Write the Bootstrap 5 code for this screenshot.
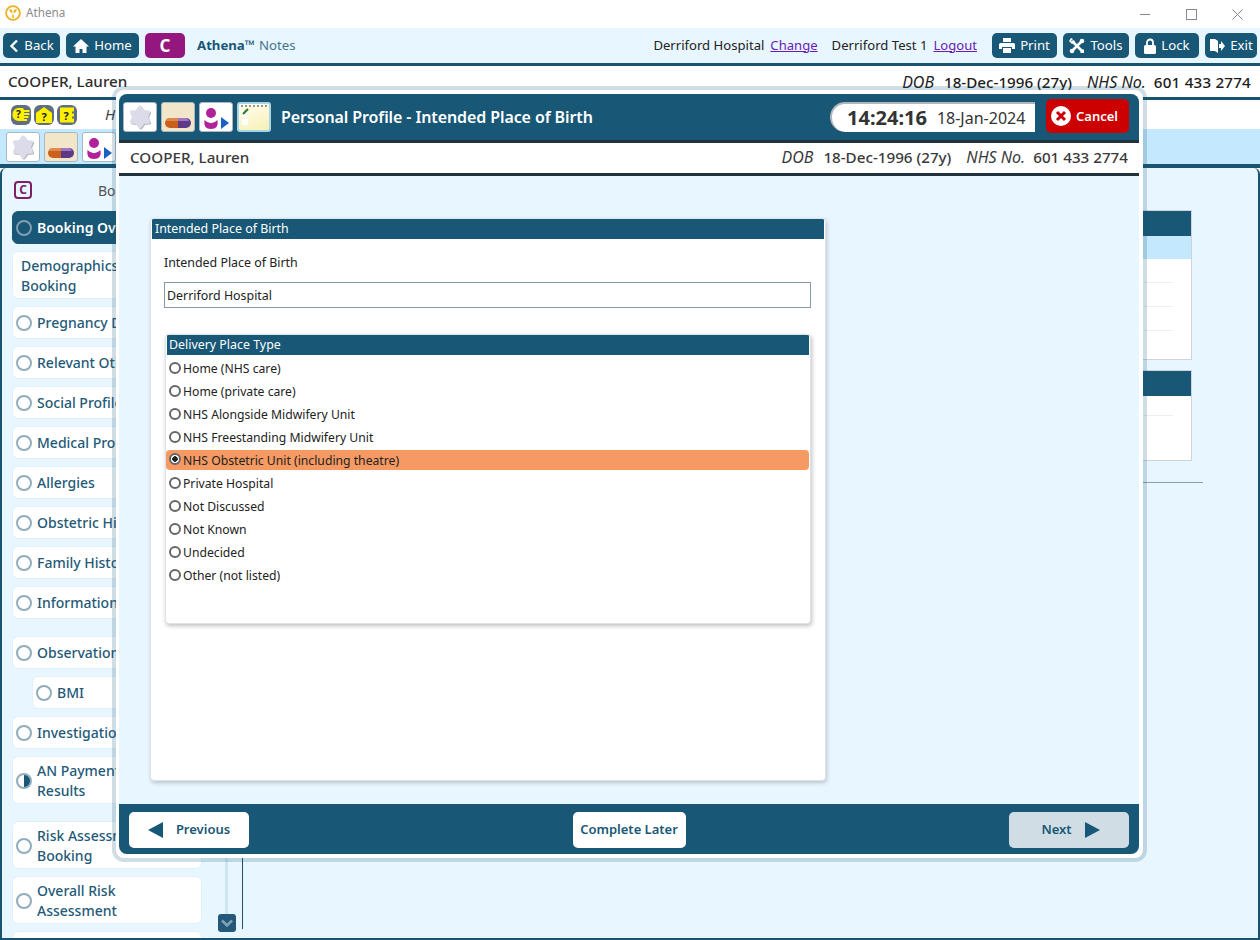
<!DOCTYPE html>
<html lang="en"><head><meta charset="utf-8"><title>Athena</title>
<link href="https://cdn.jsdelivr.net/npm/bootstrap@5.3.0/dist/css/bootstrap.min.css" rel="stylesheet">
<style>
html,body{height:940px;overflow:hidden;background:#fff}
body{font-family:"Noto Sans","Open Sans",sans-serif;font-size:13px;color:#222;position:relative;width:1260px}
.titlebar{height:28px;padding-left:5px;padding-bottom:2px;color:#8b8b8b;font-size:11.7px}
.logomark{margin-right:5px}
.winctl{margin-left:auto}
.winctl span{width:46px;height:28px;display:flex;align-items:center;justify-content:center;padding-top:2px}
.toolbar{height:38px;background:#e8f6ff;border-bottom:3px solid #18546f;padding:5px 3px 0 3px;gap:6px}
.tb{height:25px;background:#185776;color:#fff;border:0;border-radius:5px;font-size:13.2px;padding:0;display:inline-flex;align-items:center;justify-content:center;gap:5px;line-height:1;flex:none}
.tb:hover{background:#185776;color:#fff}
.tb-c{background:#93177e;width:40px;font-weight:700;font-size:17px}
.tb-c:hover{background:#93177e}
.wback{width:57px}.whome{width:73px}.wprint{width:65px}.wtools{width:66px}.wlock{width:64px}.wexit{width:52px}
.appname{color:#185776;margin-left:6px;font-size:13.2px;height:25px}
.appname b{font-weight:700}
.appname span{color:#44748b}
.who{font-size:13.1px;color:#222;height:25px;margin-right:9px}
.who a{color:#6a1bb5;margin-left:6px}
.who .usr{margin-left:14px}
.ptrow{height:34px;border-bottom:3px solid #18546f;padding:0 9px 0 8px;font-size:15.2px;font-weight:500;color:#2d2d2d}
.ptrow i{font-weight:400;color:#222;font-size:16px}
.demo b{font-weight:500;margin:0 15px 0 10px;color:#1c1c1c}
.demo b:last-child{margin:0 0 0 8px}
.ptrow .demo b:last-child{letter-spacing:.2px}
.helprow{height:29px;padding-left:11px;gap:3px}
.helprow i{margin-left:25px;color:#444;font-size:15px}
.tabrow{height:39px;background:#c4e8fd;border-bottom:4px solid #18546f;padding:0 6px;gap:4px}
.ic{width:34px;height:30px;background:#fff;border:1px solid #a9b7c2;border-radius:3px;display:flex;align-items:center;justify-content:center;flex:none}
.ic.tan{background:#f2e6ca}
.ic.note{border:2px solid #a8d5e6;background:linear-gradient(160deg,#fffdf0,#f8f0b5)}
.workarea{height:772px;background:#e8f6ff;border-left:2px solid #18546f;border-right:2px solid #18546f;border-bottom:2px solid #18546f;overflow:hidden;border-radius:6px 6px 0 0}
.leftnav{width:200px;flex:none;padding:43px 0 0 10px;gap:7px;position:relative}
.navhead{position:absolute;left:12px;top:13px;width:18px;height:18px;border:2px solid #7d1f63;border-radius:4px;color:#7d1f63;font-size:12px;line-height:13px;text-align:center;font-weight:700}
.navhead2{position:absolute;left:96px;top:12px;color:#555;font-size:14px}
.navit{width:190px;height:33px;background:#fff;border:1px solid #dff1fb;border-radius:6px;display:flex;align-items:center;gap:3px;padding:0 0 0 3px;color:#1f5a78;font-size:14px;font-weight:500;line-height:20px;flex:none}
.navit.tall{height:48px;padding-top:1px}
.navit.active{background:#185776;color:#fff;border-color:#185776;font-weight:600}
.navit.sub{margin-left:20px;width:170px}
.navit.plain{padding-left:8px}
.navit.gap-a{margin-top:10px}
.rad{width:16px;height:16px;border:2px solid #8fadbd;border-radius:50%;flex:none;background:#fff;margin-right:2px}
.active .rad{background:#185776;border-color:#7f9eb0}
.rad.half{background:linear-gradient(90deg,#fff 50%,#185776 50%)}
.scrollcol{width:26px;flex:none;position:relative;margin-left:14px}
.track{position:absolute;left:9px;top:0;bottom:8px;width:3px;background:#cfe7f5}
.scrolldn{position:absolute;left:2px;top:746px;width:18px;height:18px;background:#24597a;border-radius:3px;display:flex;align-items:center;justify-content:center}
.vline{width:1px;background:#18546f;margin-bottom:9px;flex:none}
.content{flex:1;padding:42px 66px 0 0;display:flex;flex-direction:column;align-items:flex-end}
.bgpanel{width:560px;border:1px solid #ced4d8;background:#fff}
.bgpanel .ph{height:25px;background:#185776}
.bgpanel .pl{height:23px;background:#c4e8fd}
.bgpanel .ln{height:24px;border-bottom:1px solid #eee;margin-right:18px}
.bgpanel .lnshort{height:20px}
.bgpanel .fill-a{height:28px}
.bgpanel .fill-b{height:44px}
.bgpanel.second{margin-top:10px}
.bgrule{width:600px;margin:21px -11px 0 0;border-top:1px solid #8a9fb5}
.modalbox{position:absolute;left:112px;top:86px;width:1035px;height:776px;border:4px solid rgba(24,87,118,.2);border-radius:12px;background:#fff;background-clip:padding-box;padding:4px 4px 4px 3px}
.modalin{height:100%;background:#e8f6ff;border-radius:8px;overflow:hidden}
.mhead{height:46px;background:#185776;padding:8px 10px 0 4px;color:#fff;flex:none}
.mhead .ttl{font-size:16px;font-weight:600;margin:-9px 0 0 6px;letter-spacing:-.1px}
.mhead .ic{margin-right:4px}
.clock{width:205px;height:30px;background:#fff;border-top:2px solid #b0b6ba;border-left:2px solid #b0b6ba;border-radius:15px 0 0 15px;color:#333;padding-left:15px;gap:10px;margin-left:auto;flex:none}
.clock b{font-size:20px;font-weight:700}
.clock span{font-size:16px}
.btncancel{width:83px;height:34px;background:#c00;color:#fff;border:0;border-radius:5px;margin-left:11px;margin-top:-3px;font-size:13px;font-weight:600;padding:2px 0 0 5px;gap:5px;flex:none}
.btncancel svg{margin-top:-2px}
.btncancel:hover{background:#c00;color:#fff}
.mpt{height:36px;background:#fff;border-top:3px solid #24303a;border-bottom:3px solid #24303a;padding:0 11px 2px;font-size:15.2px;color:#3a3a3a;flex:none;font-weight:500}
.mpt i{font-weight:400;font-size:16px}
.mpt .demo b{color:#3a3a3a}
.mbody{flex:1;padding:42px 0 0 31px}
.fcard{width:676px;height:563px;background:#fff;border:1px solid #dde3e6;border-radius:4px;box-shadow:1px 2px 4px rgba(0,0,0,.2);overflow:hidden}
.fhd{height:20px;background:#185776;color:#fff;font-size:12.4px;line-height:20px;padding-left:3px;margin:0 1px 0 1px}
.flabel{margin:15px 0 0 13px;font-size:12.4px;line-height:18px;color:#222}
.finput{margin:10px 0 0 13px;width:647px;height:26px;border:1px solid #8499ac;font-size:12.4px;line-height:25px;padding:0 2px;color:#222;background:#fff}
.subcard{margin:26px 0 0 14px;width:646px;height:290px;border:1px solid #dde3e6;border-radius:4px;box-shadow:1px 2px 4px rgba(0,0,0,.25);overflow:hidden;background:#fff}
.subcard .fhd{padding-left:2px}
.opts{padding-top:2px}
.opt{height:23px;display:flex;align-items:center;font-size:12.2px;color:#222;padding:2px 0 0 3px;margin:0 1px 0 0;border-radius:4px}
.opt.sel{background:#f59a62;height:20px;margin:1px 1px 2px 0}
.dot{width:12px;height:12px;border:2px solid #666;border-radius:50%;background:#fff;margin:-4px 2px 0 0;flex:none}
.sel .dot{background:radial-gradient(circle,#222 0 2.5px,#fff 3px)}
.mfoot{height:50px;background:#185776;padding:8px 10px;flex:none}
.fb{height:36px;background:#fff;border:0;border-radius:5px;color:#185776;font-size:13px;font-weight:600;display:inline-flex;align-items:center;justify-content:center;gap:12px;padding:0}
.fb:hover{background:#fff;color:#185776}
.fb.wide{width:120px}
.fb.cl{width:113px}
.fb.off{background:#d0dde5;padding-left:3px}
.fb.off:hover{background:#d0dde5}
</style></head>
<body>
<div class="titlebar d-flex align-items-center">
<svg width="16" height="16" viewBox="0 0 16 16" class="logomark"><circle cx="8" cy="8" r="6.9" fill="none" stroke="#ecb21e" stroke-width="1.800"/><path d="M4 4.500C5 7.500 6.500 8 7.300 8.500L7.300 5C6 4.200 5 4.200 4 4.500zM12 4.500C11 7.500 9.500 8 8.700 8.500L8.700 5C10 4.200 11 4.200 12 4.500zM7.200 9.500h1.600v3.500h-1.600z" fill="#ecb21e"/></svg>
<span>Athena</span>
<div class="winctl d-flex">
<span><svg width="10" height="10"><path d="M0 5.500h10" stroke="#888"/></svg></span>
<span><svg width="11" height="11"><rect x=".5" y=".5" width="10" height="10" fill="none" stroke="#888"/></svg></span>
<span><svg width="11" height="11"><path d="M.5.500l10 10M10.500.500l-10 10" stroke="#888"/></svg></span>
</div>
</div>
<div class="toolbar d-flex">
<button class="btn tb wback"><svg width="10" height="14" viewBox="0 0 10 14"><path d="M8 1.500 2.500 7 8 12.500" fill="none" stroke="#fff" stroke-width="2.400"/></svg>Back</button>
<button class="btn tb whome"><svg width="16" height="14" viewBox="0 0 16 14"><path d="M8 0 0 7.500h2.500V14h4v-4h3v4h4V7.500H16z" fill="#fff"/></svg>Home</button>
<button class="btn tb tb-c">C</button>
<div class="appname d-flex align-items-center"><b>Athena™</b><span class="ms-1">Notes</span></div>
<div class="who d-flex align-items-center ms-auto">Derriford Hospital<a href="#">Change</a><span class="usr">Derriford Test 1</span><a href="#">Logout</a></div>
<button class="btn tb wprint"><svg width="16" height="15" viewBox="0 0 16 15"><path d="M4 0h8v4H4zM1.500 5h13A1.500 1.500 0 0 1 16 6.500V11h-3V9H3v2H0V6.500A1.500 1.500 0 0 1 1.500 5zM4 10h8v5H4z" fill="#fff"/></svg>Print</button>
<button class="btn tb wtools"><svg width="16" height="16" viewBox="0 0 16 16"><path d="M3 3l10 10M13 3 3 13" stroke="#fff" stroke-width="2.600"/><path d="M0 3l2-3 2 1-2 2 1 1 2-2 1 2-3 2z" fill="#fff"/><circle cx="13" cy="3" r="2.300" fill="#fff"/><path d="M11.500 11.500h3.500v3.500h-3.500z" fill="#fff"/><circle cx="3" cy="13" r="2.300" fill="#fff"/></svg>Tools</button>
<button class="btn tb wlock"><svg width="12" height="16" viewBox="0 0 12 16"><path d="M3 7V4.500a3 3 0 0 1 6 0V7" fill="none" stroke="#fff" stroke-width="1.800"/><rect y="7" width="12" height="9" rx="1.500" fill="#fff"/></svg>Lock</button>
<button class="btn tb wexit"><svg width="16" height="16" viewBox="0 0 16 16"><path d="M1 1h5l3 2v12l-3-2H1z" fill="#fff"/><path d="M10 6h2V3l4 5-4 5v-3h-2z" fill="#fff"/></svg>Exit</button>
</div>
<div class="ptrow d-flex align-items-center justify-content-between"><span>COOPER, Lauren</span><span class="demo"><i>DOB</i><b>18-Dec-1996 (27y)</b><i>NHS No.</i><b>601 433 2774</b></span></div>
<div class="helprow d-flex align-items-center">
<svg width="20" height="20" viewBox="0 0 20 20"><rect width="20" height="20" rx="6" fill="#5f6f80"/><path d="M1.500 9C2 5 5 3 8 3h4l1 2h5.500v2H13v1h5.500v2H13v1h4.500v2H13v1h3v2H9c-4 0-7.500-2-7.500-6z" fill="#ffef00"/><text x="7.500" y="13" font-size="10" font-weight="700" text-anchor="middle" fill="#222">?</text></svg>
<svg width="20" height="20" viewBox="0 0 20 20"><rect width="20" height="20" rx="6" fill="#5f6f80"/><path d="M10 2 18 8v10H2V8z" fill="#ffef00"/><text x="10" y="15.500" font-size="11" font-weight="700" text-anchor="middle" fill="#222">?</text></svg>
<svg width="20" height="20" viewBox="0 0 20 20"><rect width="20" height="20" rx="6" fill="#5f6f80"/><path d="M3 2.500h14v4h-2v2h2v3h-2v2h2v4H3z" fill="#ffef00"/><text x="9" y="14.500" font-size="11" font-weight="700" text-anchor="middle" fill="#222">?</text></svg>
<i>H</i>
</div>
<div class="tabrow d-flex align-items-center">
<span class="ic"><svg width="32" height="28" viewBox="0 0 32 28"><use href="#star"/></svg></span>
<span class="ic tan"><svg width="32" height="28" viewBox="0 0 32 28"><use href="#pill"/></svg></span>
<span class="ic"><svg width="32" height="28" viewBox="0 0 32 28"><use href="#person"/></svg></span>
</div>
<div class="workarea d-flex">
<div class="leftnav d-flex flex-column">
<span class="navhead">C</span><span class="navhead2">Booking</span>
<div class="navit active"><span class="rad"></span>Booking Overview</div>
<div class="navit tall plain">Demographics -<br>Booking</div>
<div class="navit"><span class="rad"></span>Pregnancy Details</div>
<div class="navit"><span class="rad"></span>Relevant Other</div>
<div class="navit"><span class="rad"></span>Social Profile</div>
<div class="navit"><span class="rad"></span>Medical Profile</div>
<div class="navit"><span class="rad"></span>Allergies</div>
<div class="navit"><span class="rad"></span>Obstetric History</div>
<div class="navit"><span class="rad"></span>Family History</div>
<div class="navit"><span class="rad"></span>Information</div>
<div class="navit gap-a"><span class="rad"></span>Observations</div>
<div class="navit sub"><span class="rad"></span>BMI</div>
<div class="navit"><span class="rad"></span>Investigations</div>
<div class="navit tall"><span class="rad half"></span><span>AN Payment<br>Results</span></div>
<div class="navit tall gap-a"><span class="rad"></span><span>Risk Assessment<br>Booking</span></div>
<div class="navit tall"><span class="rad"></span><span>Overall Risk<br>Assessment</span></div>
<div class="navit"></div>
</div>
<div class="scrollcol"><div class="track"></div><div class="scrolldn"><svg width="12" height="9" viewBox="0 0 12 9"><path d="M1 1.500l5 5 5-5" fill="none" stroke="#7fa3b8" stroke-width="2.500"/></svg></div></div>
<div class="vline"></div>
<div class="content">
<div class="bgpanel"><div class="ph"></div><div class="pl"></div><div class="ln"></div><div class="ln"></div><div class="ln"></div><div class="fill-a"></div></div>
<div class="bgpanel second"><div class="ph"></div><div class="ln lnshort"></div><div class="fill-b"></div></div>
<div class="bgrule"></div>
</div>
</div>

<div class="modalbox">
<div class="modalin d-flex flex-column">
<div class="mhead d-flex align-items-start">
<span class="ic"><svg width="32" height="28" viewBox="0 0 32 28"><use href="#star"/></svg></span>
<span class="ic tan"><svg width="32" height="28" viewBox="0 0 32 28"><use href="#pill"/></svg></span>
<span class="ic"><svg width="32" height="28" viewBox="0 0 32 28"><use href="#person"/></svg></span>
<span class="ic note"><svg width="30" height="26" viewBox="0 0 30 26"><path d="M2 2h27" stroke="#777" stroke-width="1.500" stroke-dasharray="2 2"/><rect x="3" y="7" width="6" height="6" fill="#fff"/><rect x="3" y="15" width="6" height="6" fill="#fff"/><path d="M4 10l5-5" stroke="#2e7d1e" stroke-width="2.200"/></svg></span>
<span class="ttl align-self-center">Personal Profile - Intended Place of Birth</span>
<div class="clock d-flex align-items-center"><b>14:24:16</b><span>18-Jan-2024</span></div>
<button class="btn btncancel d-inline-flex align-items-center"><svg width="20" height="20" viewBox="0 0 20 20"><circle cx="10" cy="10" r="10" fill="#fff"/><path d="M6 6l8 8M14 6l-8 8" stroke="#c00" stroke-width="3"/></svg>Cancel</button>
</div>
<div class="mpt d-flex align-items-center justify-content-between"><span>COOPER, Lauren</span><span class="demo"><i>DOB</i><b>18-Dec-1996 (27y)</b><i>NHS No.</i><b>601 433 2774</b></span></div>
<div class="mbody">
<div class="fcard">
<div class="fhd">Intended Place of Birth</div>
<div class="flabel">Intended Place of Birth</div>
<div class="finput">Derriford Hospital</div>
<div class="subcard">
<div class="fhd">Delivery Place Type</div>
<div class="opts">
<div class="opt"><span class="dot"></span>Home (NHS care)</div>
<div class="opt"><span class="dot"></span>Home (private care)</div>
<div class="opt"><span class="dot"></span>NHS Alongside Midwifery Unit</div>
<div class="opt"><span class="dot"></span>NHS Freestanding Midwifery Unit</div>
<div class="opt sel"><span class="dot"></span>NHS Obstetric Unit (including theatre)</div>
<div class="opt"><span class="dot"></span>Private Hospital</div>
<div class="opt"><span class="dot"></span>Not Discussed</div>
<div class="opt"><span class="dot"></span>Not Known</div>
<div class="opt"><span class="dot"></span>Undecided</div>
<div class="opt"><span class="dot"></span>Other (not listed)</div>
</div>
</div>
</div>
</div>
<div class="mfoot d-flex justify-content-between">
<button class="btn fb wide"><svg width="16" height="16" viewBox="0 0 16 16"><path d="M15 0v16L0 8z" fill="#185776"/></svg>Previous</button>
<button class="btn fb cl">Complete Later</button>
<button class="btn fb wide off">Next<svg width="16" height="16" viewBox="0 0 16 16"><path d="M1 0v16l15-8z" fill="#185776"/></svg></button>
</div>
</div>
</div>
<svg width="0" height="0" class="position-absolute"><defs>
<path id="starshape" d="M16 4 19.250 8.370 24.660 9 22.500 14 24.660 19 19.250 19.630 16 24 12.750 19.630 7.340 19 9.500 14 7.340 9 12.750 8.370z" stroke-width="3" stroke-linejoin="round"/>
<g id="star"><use href="#starshape" fill="#b9b9be" stroke="#b9b9be" transform="translate(1 1)"/><use href="#starshape" fill="#dcdbe9" stroke="#dcdbe9"/></g>
<g id="pill"><path d="M8 15h8v10H8a5 5 0 0 1 0-10z" fill="#c9601c"/><path d="M16 15h8a5 5 0 0 1 0 10h-8z" fill="#5e3a86"/><path d="M6 15h10v3H4z" fill="#e08a4a"/><path d="M16 15h9l2 3H16z" fill="#a175c4"/></g>
<g id="person"><circle cx="11" cy="10" r="5" fill="#b0219a"/><path d="M4.500 17Q11 23.500 17.500 17Q19 26 11 26Q3 26 4.500 17z" fill="#b0219a"/><path d="M21 14v12l8-6z" fill="#1a62c4"/></g>
</defs></svg>
</body></html>
